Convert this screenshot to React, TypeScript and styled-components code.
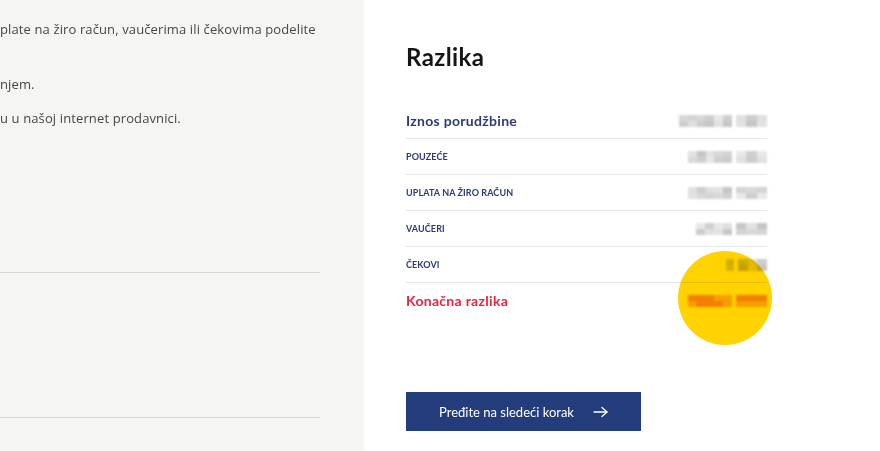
import React from "react";
import styled, { createGlobalStyle } from "styled-components";

const Global = createGlobalStyle`
  html, body { margin: 0; padding: 0; background: #ffffff; }
  body { font-family: "Lato", "Open Sans", sans-serif; overflow: hidden; }
  #root { width: 880px; height: 451px; }
`;

const Page = styled.div`
  display: flex;
  width: 880px;
  height: 451px;
  overflow: hidden;
`;

const LeftPanel = styled.div`
  width: 364px;
  flex: none;
  background: #f5f5f4;
  padding-top: 18px;
  box-sizing: border-box;
  overflow: hidden;
`;

const Para = styled.p<{ $gap: number }>`
  margin: 0 0 ${(p) => p.$gap}px 0;
  font-family: "Open Sans", "Lato", sans-serif;
  font-size: 13px;
  line-height: 22px;
  letter-spacing: 0.12px;
  color: #474747;
  white-space: nowrap;
`;

const LeftRule = styled.div<{ $top: number }>`
  width: 320px;
  height: 1px;
  background: #d9d9d9;
  margin-top: ${(p) => p.$top}px;
`;

const RightPanel = styled.div`
  flex: 1;
  background: #ffffff;
  padding: 42px 0 0 42px;
  box-sizing: border-box;
`;

const Heading = styled.h2`
  margin: 0;
  font-size: 24px;
  line-height: 30px;
  font-weight: 700;
  color: #151515;
  letter-spacing: 0.4px;
`;

const Rows = styled.div`
  position: relative;
  width: 361px;
  margin-top: 31px;
`;

const Row = styled.div<{ $last?: boolean }>`
  display: flex;
  align-items: center;
  justify-content: space-between;
  height: 35px;
  border-bottom: ${(p) => (p.$last ? "none" : "1px solid #e6e6e6")};
`;

const Label = styled.span<{ $variant: "main" | "small" | "total" }>`
  font-weight: 700;
  color: ${(p) => (p.$variant === "total" ? "#e8253f" : "#2d3a78")};
  font-size: ${(p) => (p.$variant === "small" ? "9px" : "14px")};
  letter-spacing: ${(p) => (p.$variant === "small" ? "0.1px" : "0.3px")};
`;

const Mosaic = styled.div`
  display: flex;
  gap: 4px;
  height: 12px;
`;

const Group = styled.div<{ $w: number }>`
  width: ${(p) => p.$w}px;
  display: grid;
  grid-template-columns: repeat(auto-fill, minmax(8px, 1fr));
  grid-auto-rows: 6px;
  filter: blur(0.8px);
`;

const Cell = styled.div``;

const Highlight = styled.div`
  position: absolute;
  left: 272px;
  top: 148px;
  width: 94px;
  height: 94px;
  border-radius: 50%;
  background: #ffd200;
  mix-blend-mode: multiply;
  pointer-events: none;
`;

const Button = styled.button`
  margin-top: 74px;
  width: 235px;
  height: 39px;
  border: none;
  background: #233c7b;
  color: #ffffff;
  font-family: "Lato", sans-serif;
  font-size: 13px;
  display: flex;
  align-items: center;
  justify-content: center;
  gap: 19px;
  padding: 0;
  cursor: pointer;
`;

const grays = ["#cfcfcf", "#e0e0e0", "#c6c6c6", "#d8d8d8", "#e8e8e8", "#cccccc", "#e2e2e2", "#d4d4d4"];
const reds = ["#f29aa0", "#f5b4b8", "#f08890", "#f7c0c2", "#f2a0a6", "#f4aab0"];

function Blur({ a, b, seed, palette }: { a: number; b: number; seed: number; palette: string[] }) {
  const make = (w: number, s: number) => {
    const cols = Math.max(1, Math.floor(w / 8));
    const cells = [];
    for (let i = 0; i < cols * 2; i++) {
      const c = palette[(i * 7 + s * 3 + (i % 3) * 5) % palette.length];
      cells.push(<Cell key={i} style={{ background: c }} />);
    }
    return <Group $w={w}>{cells}</Group>;
  };
  return (
    <Mosaic>
      {make(a, seed)}
      {make(b, seed + 2)}
    </Mosaic>
  );
}

export default function App() {
  return (
    <Page>
      <Global />
      <LeftPanel>
        <Para $gap={33}>plate na žiro račun, vaučerima ili čekovima podelite</Para>
        <Para $gap={12}>njem.</Para>
        <Para $gap={0}>u u našoj internet prodavnici.</Para>
        <LeftRule $top={143} />
        <LeftRule $top={144} />
      </LeftPanel>
      <RightPanel>
        <Heading>Razlika</Heading>
        <Rows>
          <Row>
            <Label $variant="main">Iznos porudžbine</Label>
            <Blur a={53} b={31} seed={1} palette={grays} />
          </Row>
          <Row>
            <Label $variant="small">POUZEĆE</Label>
            <Blur a={44} b={31} seed={2} palette={grays} />
          </Row>
          <Row>
            <Label $variant="small">UPLATA NA ŽIRO RAČUN</Label>
            <Blur a={44} b={31} seed={3} palette={grays} />
          </Row>
          <Row>
            <Label $variant="small">VAUČERI</Label>
            <Blur a={36} b={31} seed={4} palette={grays} />
          </Row>
          <Row>
            <Label $variant="small">ČEKOVI</Label>
            <Blur a={8} b={29} seed={5} palette={grays} />
          </Row>
          <Row $last>
            <Label $variant="total">Konačna razlika</Label>
            <Blur a={44} b={31} seed={6} palette={reds} />
          </Row>
          <Highlight />
        </Rows>
        <Button>
          <span>Pređite na sledeći korak</span>
          <svg width="15" height="12" viewBox="0 0 15 12" fill="none" stroke="#ffffff" strokeWidth="1.3" strokeLinecap="round" strokeLinejoin="round">
            <path d="M1 6h13" />
            <path d="M9 1.5L14 6l-5 4.5" />
          </svg>
        </Button>
      </RightPanel>
    </Page>
  );
}
